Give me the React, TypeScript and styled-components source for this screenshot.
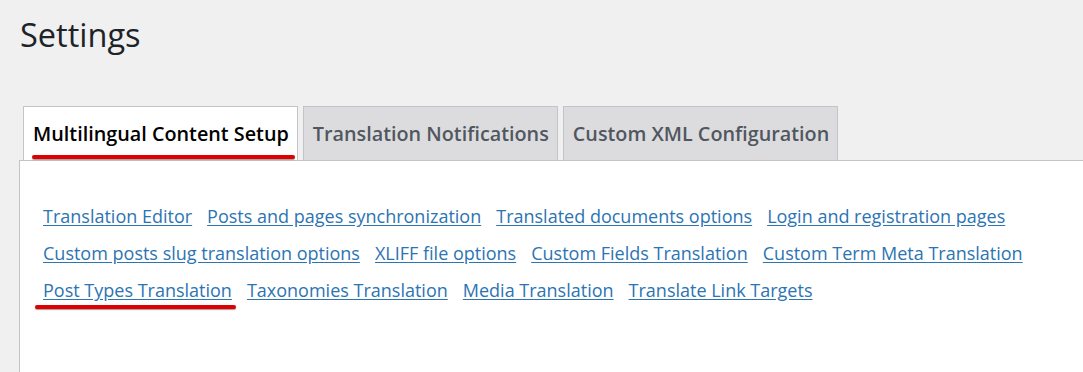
import styled, { createGlobalStyle } from 'styled-components';

const GlobalStyle = createGlobalStyle`
  html, body {
    margin: 0;
    padding: 0;
    background: #f0f0f1;
    height: 100%;
  }
  #root {
    height: 100%;
  }
`;

const tabs = [
  { label: 'Multilingual Content Setup', active: true },
  { label: 'Translation Notifications', active: false },
  { label: 'Custom XML Configuration', active: false },
];

const links = [
  'Translation Editor',
  'Posts and pages synchronization',
  'Translated documents options',
  'Login and registration pages',
  'Custom posts slug translation options',
  'XLIFF file options',
  'Custom Fields Translation',
  'Custom Term Meta Translation',
  'Post Types Translation',
  'Taxonomies Translation',
  'Media Translation',
  'Translate Link Targets',
];

const marked = 'Post Types Translation';

function App() {
  return (
    <>
      <GlobalStyle />
      <Wrap>
        <Title>Settings</Title>
        <TabBar>
          {tabs.map((t) => (
            <Tab key={t.label} $active={t.active}>
              {t.label}
              {t.active && <Mark $left={8} $width={263} $top={48} />}
            </Tab>
          ))}
        </TabBar>
        <Panel>
          <LinkList>
            {links.map((l) => (
              <LinkItem key={l}>
                <SubLink href="#">{l}</SubLink>
                {l === marked && <Mark $left={-8} $width={201} $top={33} />}
              </LinkItem>
            ))}
          </LinkList>
        </Panel>
      </Wrap>
    </>
  );
}

export default App;

const Wrap = styled.div`
  display: flex;
  flex-direction: column;
  height: 100%;
  padding-left: 19px;
  font-family: 'Open Sans', 'Noto Sans', sans-serif;
  box-sizing: border-box;
`;

const Title = styled.h1`
  margin: 0;
  padding: 10px 0 0 1px;
  font-size: 32.5px;
  font-weight: 400;
  line-height: 50px;
  color: #1d2327;
`;

const TabBar = styled.nav`
  display: flex;
  gap: 5px;
  padding-left: 4px;
  margin-top: 46px;
`;

const Tab = styled.div<{ $active: boolean }>`
  position: relative;
  display: flex;
  align-items: center;
  height: 53px;
  padding: 0 8px 0 9px;
  border: 1px solid #c3c4c7;
  border-bottom: none;
  background: ${(p) => (p.$active ? '#ffffff' : '#dcdcde')};
  color: ${(p) => (p.$active ? '#000000' : '#50575e')};
  font-size: 19.8px;
  font-weight: 600;
  margin-bottom: ${(p) => (p.$active ? '-1px' : '0')};
  z-index: ${(p) => (p.$active ? 1 : 0)};
  white-space: nowrap;
`;

const Panel = styled.section`
  flex: 1;
  background: #ffffff;
  border-top: 1px solid #c3c4c7;
  border-left: 1px solid #c3c4c7;
  padding: 37px 0 0 23px;
`;

const LinkList = styled.div`
  display: flex;
  flex-wrap: wrap;
  column-gap: 15px;
  max-width: 1030px;
`;

const LinkItem = styled.span`
  position: relative;
  font-size: 18px;
  line-height: 37px;
  height: 37px;
`;

const SubLink = styled.a`
  color: #2c74b2;
  text-decoration: underline;
  text-underline-offset: 2px;
`;

const Mark = styled.span<{ $left: number; $width: number; $top: number }>`
  position: absolute;
  left: ${(p) => p.$left}px;
  top: ${(p) => p.$top}px;
  width: ${(p) => p.$width}px;
  height: 4px;
  border-radius: 2px;
  background: #e00000;
  box-shadow: 0 1px 1px rgba(60, 60, 60, 0.5);
`;
